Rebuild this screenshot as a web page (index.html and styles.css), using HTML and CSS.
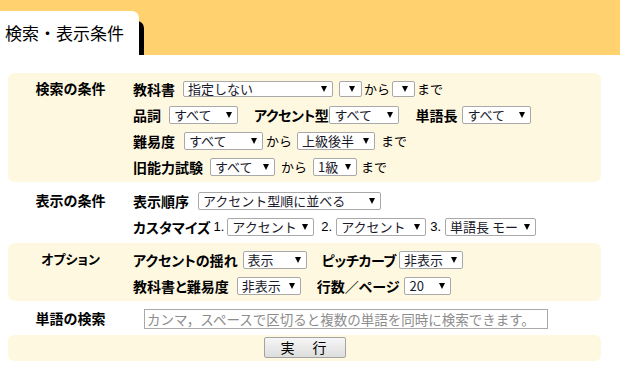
FILE: index.html
```html
<!DOCTYPE html>
<html lang="ja">
<head>
<meta charset="utf-8">
<title>検索・表示条件</title>
<link rel="stylesheet" href="styles.css">
</head>
<body>
<div class="header">
  <div class="tab">検索・表示条件</div>
</div>
<div class="form">
  <div class="sec alt s1">
    <div class="lab">検索の条件</div>
    <div class="rows">
      <div class="row">
        <span class="k">教科書</span>
        <span class="sel short w-book"><span class="v">指定しない</span></span>
        <span class="sel short w-mini ml6"><span class="v"></span></span>
        <span class="t ml2">から</span>
        <span class="sel short w-mini ml2"><span class="v"></span></span>
        <span class="t ml2">まで</span>
      </div>
      <div class="row">
        <span class="k">品詞</span>
        <span class="sel w-69"><span class="v">すべて</span></span>
        <span class="k ml16 mr1 tight">アクセント型</span>
        <span class="sel w-70"><span class="v">すべて</span></span>
        <span class="k ml16 mr5">単語長</span>
        <span class="sel w-69"><span class="v">すべて</span></span>
      </div>
      <div class="row">
        <span class="k mr9">難易度</span>
        <span class="sel w-79"><span class="v">すべて</span></span>
        <span class="t ml3">から</span>
        <span class="sel w-78 ml5"><span class="v">上級後半</span></span>
        <span class="t ml6">まで</span>
      </div>
      <div class="row">
        <span class="k mr7">旧能力試験</span>
        <span class="sel w-65"><span class="v">すべて</span></span>
        <span class="t ml6">から</span>
        <span class="sel w-44 ml6"><span class="v">1級</span></span>
        <span class="t ml4">まで</span>
      </div>
    </div>
  </div>

  <div class="sec s2">
    <div class="lab">表示の条件</div>
    <div class="rows">
      <div class="row">
        <span class="k mr9">表示順序</span>
        <span class="sel w-183"><span class="v">アクセント型順に並べる</span></span>
      </div>
      <div class="row">
        <span class="k mr3">カスタマイズ</span>
        <span class="n">1.</span>
        <span class="sel w-87 ml3"><span class="v">アクセント</span></span>
        <span class="n ml7">2.</span>
        <span class="sel w-90 ml4"><span class="v">アクセント</span></span>
        <span class="n ml4">3.</span>
        <span class="sel w-91 ml4"><span class="v clip">単語長 モー</span></span>
      </div>
    </div>
  </div>

  <div class="sec alt s3">
    <div class="lab">オプション</div>
    <div class="rows">
      <div class="row">
        <span class="k mr5">アクセントの揺れ</span>
        <span class="sel w-64"><span class="v">表示</span></span>
        <span class="k ml15 mr3 tight">ピッチカーブ</span>
        <span class="sel w-64"><span class="v">非表示</span></span>
      </div>
      <div class="row">
        <span class="k">教科書と難易度</span>
        <span class="sel w-64"><span class="v">非表示</span></span>
        <span class="k ml16 mr5">行数／ページ</span>
        <span class="sel w-47"><span class="v">20</span></span>
      </div>
    </div>
  </div>

  <div class="sec s4">
    <div class="lab">単語の検索</div>
    <div class="rows">
      <div class="row">
        <input class="word" type="text" placeholder="カンマ，スペースで区切ると複数の単語を同時に検索できます。">
      </div>
    </div>
  </div>

  <div class="sec alt s5">
    <button class="run" type="button">実　行</button>
  </div>
</div>
</body>
</html>
```

FILE: styles.css
```css
html, body {
  margin: 0;
  padding: 0;
  background: #fff;
}

body {
  font-family: "Noto Sans CJK JP", "Noto Sans", sans-serif;
  color: #000;
}

.header {
  height: 55px;
  background: #ffd26f;
  overflow: hidden;
  display: flex;
  align-items: flex-end;
}

.tab {
  width: 139px;
  height: 44px;
  box-sizing: border-box;
  background: #fff;
  border-top-right-radius: 7px;
  box-shadow: 5px 10px 0 #000;
  font-size: 17px;
  line-height: 44px;
  padding-left: 5px;
}

.form {
  width: 593px;
  margin: 18px 0 0 8px;
}

.sec {
  display: grid;
  grid-template-columns: 125px 1fr;
  border-radius: 6px;
}

.alt {
  background: #fff8e1;
}

.s1 { padding: 3px 0 2px; }
.s2 { padding: 6px 0 3px; }
.s3 { padding: 4px 0 2px; }
.s4 { padding: 5px 0 3px; }
.s5 {
  display: flex;
  justify-content: center;
  padding: 2px 0 3px;
}

.lab {
  text-align: center;
  font-weight: bold;
  font-size: 14px;
  line-height: 24px;
  font-feature-settings: "palt";
}

.s3 .lab {
  font-size: 13px;
}

.rows {
  display: flex;
  flex-direction: column;
}

.row {
  display: flex;
  align-items: center;
  height: 26px;
  white-space: nowrap;
}

.k {
  font-weight: bold;
  font-size: 14px;
  line-height: 20px;
  margin-right: 8px;
  font-feature-settings: "palt";
}

.k.tight {
  letter-spacing: -0.4px;
}

.t {
  font-size: 13px;
  line-height: 18px;
}

.n {
  font-family: "Liberation Sans", Arial, sans-serif;
  font-size: 13px;
  line-height: 18px;
}

.sel {
  display: inline-flex;
  align-items: center;
  justify-content: space-between;
  box-sizing: border-box;
  height: 18px;
  border: 1px solid #a9a9a9;
  border-radius: 2px;
  background: #fff;
  padding: 0 5px 0 4px;
  font-size: 13px;
  color: #1a1a2a;
}

.sel.short { height: 16px; }

.sel .v {
  white-space: nowrap;
  line-height: 16px;
  flex: 1 1 auto;
}

.sel .v.clip {
  overflow: hidden;
  min-width: 0;
  line-height: 18px;
}

.sel::after {
  content: "";
  flex: none;
  width: 0;
  height: 0;
  margin-left: 2px;
  border-left: 3.5px solid transparent;
  border-right: 3.5px solid transparent;
  border-top: 6px solid #000;
}

.w-book { width: 150px; }
.w-mini { width: 23px; padding: 0 6px 0 4px; }
.w-69 { width: 69px; }
.w-70 { width: 70px; }
.w-79 { width: 79px; }
.w-78 { width: 78px; }
.w-65 { width: 65px; }
.w-44 { width: 44px; }
.w-183 { width: 183px; }
.w-87 { width: 87px; }
.w-90 { width: 90px; }
.w-91 { width: 91px; }
.w-64 { width: 64px; }
.w-47 { width: 47px; }

.ml2 { margin-left: 2px; }
.ml3 { margin-left: 3px; }
.ml4 { margin-left: 4px; }
.ml5 { margin-left: 5px; }
.ml6 { margin-left: 6px; }
.ml7 { margin-left: 7px; }
.ml15 { margin-left: 15px; }
.ml16 { margin-left: 16px; }
.mr1 { margin-right: 1px; }
.mr3 { margin-right: 3px; }
.mr5 { margin-right: 5px; }
.mr7 { margin-right: 7px; }
.mr9 { margin-right: 9px; }

.word {
  box-sizing: border-box;
  width: 404px;
  height: 20px;
  margin-left: 11px;
  border: 1px solid #a9a9a9;
  padding: 0 2px;
  font-family: "Noto Sans CJK JP", sans-serif;
  font-size: 13.5px;
  outline: none;
}

.word::placeholder {
  color: #8c8c8c;
}

.run {
  box-sizing: border-box;
  width: 82px;
  height: 21px;
  padding: 0;
  border: 1px solid #a3a3a3;
  border-radius: 2px;
  background: linear-gradient(#f6f6f6, #dddddd);
  font-family: "Noto Sans CJK JP", sans-serif;
  font-size: 14px;
  line-height: 19px;
  color: #000;
  letter-spacing: 2px;
}
```
